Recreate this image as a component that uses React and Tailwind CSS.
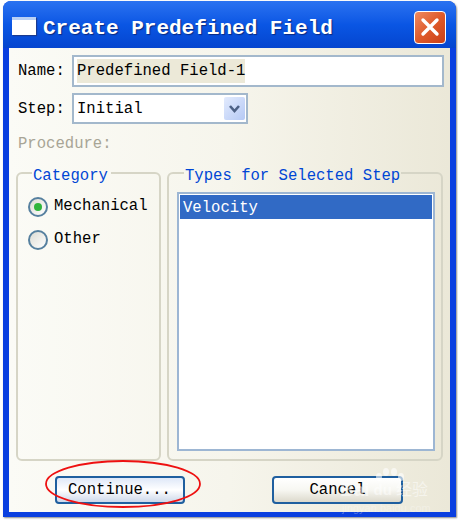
export default function App() {
  const mono = "font-['Liberation_Mono','DejaVu_Sans_Mono',monospace]";
  return (
    <div className={`relative w-[458px] h-[521px] bg-white overflow-hidden ${mono} text-[15.6px] text-black`}>
      <div className="ml-[3px] mt-[1px] w-[453px] h-[516px] flex flex-col rounded-t-[8px] bg-[#0a3fe0] shadow-[1px_1px_2px_#8a8a8a]">
        {/* Title bar */}
        <div className="h-[47px] shrink-0 flex items-center pl-[9px] pr-[10px] rounded-t-[8px] bg-gradient-to-b from-[#2a72f0] via-[#0a56e4] to-[#0545cf]">
          <div className="w-[24px] h-[18px] mt-[3px] bg-white border-t-[3px] border-[#b9d0f5] shadow-[1px_1px_1px_#1a3a90]" />
          <div className="ml-[7px] mt-[7px] text-[21px] leading-none font-bold text-white [text-shadow:1px_1px_1px_#0a2a80] whitespace-nowrap">Create Predefined Field</div>
          <div className="ml-auto mt-[5px] w-[32px] h-[33px] rounded-[4px] border border-white bg-gradient-to-br from-[#ee8a60] via-[#df5a2a] to-[#c93f18] flex items-center justify-center">
            <svg width="20" height="20" viewBox="0 0 20 20"><path d="M3 3 L17 17 M17 3 L3 17" stroke="#fff" strokeWidth="3.4" strokeLinecap="round" /></svg>
          </div>
        </div>
        {/* Body */}
        <div className="mx-[6px] mb-[5px] flex-1 flex flex-col pl-[9px] pr-[6px] bg-gradient-to-r from-[#fbfbf6] via-[#f6f5ec] to-[#ebe8d8]">
          <div className="flex items-center mt-[7px] h-[32px]">
            <span className="w-[54px] shrink-0 pt-[2px]">Name:</span>
            <div className="flex-1 h-[32px] bg-white border-2 border-[#a3b8cc] flex items-center pl-[3px]">
              <span className="bg-[#ece9d8] leading-[24px] h-[24px] whitespace-nowrap">Predefined Field-1</span>
            </div>
          </div>
          <div className="flex items-center mt-[6px] h-[31px]">
            <span className="w-[54px] shrink-0 pt-[2px]">Step:</span>
            <div className="w-[176px] h-[31px] bg-white border-2 border-[#a3b8cc] flex items-center justify-between pl-[3px] pr-[1px]">
              <span className="pt-[2px]">Initial</span>
              <div className="w-[21px] h-[23px] rounded-[2px] bg-gradient-to-br from-[#e3ebfd] to-[#b5c9f5] flex items-center justify-center">
                <svg width="13" height="10" viewBox="0 0 13 10"><path d="M2 2 L6.5 7 L11 2" fill="none" stroke="#4d6185" strokeWidth="2.6" /></svg>
              </div>
            </div>
          </div>
          <div className="mt-[10px] h-[20px] leading-[20px] text-[#a8a596]">Procedure:</div>
          <div className="flex gap-[6px] mt-[9px] h-[298px] -ml-[2px]">
            <fieldset className="w-[145px] rounded-[6px] border-2 border-[#d6d5c6] pl-[15px] min-w-0">
              <legend className="text-[#0046d5] pl-[1px] pr-[3px] ml-[-1px] leading-[20px]"><span className="relative top-[3px]">Category</span></legend>
              <div className="mt-[12px] flex items-center h-[24px]">
                <div className="w-[20px] h-[20px] rounded-full border-2 border-[#56809f] bg-gradient-to-br from-[#dcdcd4] to-white flex items-center justify-center -ml-[5px]">
                  <div className="w-[8px] h-[8px] rounded-full bg-[#2fb53c]" />
                </div>
                <span className="ml-[6px]">Mechanical</span>
              </div>
              <div className="mt-[9px] flex items-center h-[24px]">
                <div className="w-[20px] h-[20px] rounded-full border-2 border-[#56809f] bg-gradient-to-br from-[#dcdcd4] to-white -ml-[5px]" />
                <span className="ml-[6px]">Other</span>
              </div>
            </fieldset>
            <fieldset className="w-[276px] rounded-[6px] border-2 border-[#d6d5c6] px-[8px] min-w-0">
              <legend className="text-[#0046d5] px-[1px] ml-[7px] leading-[20px]"><span className="relative top-[3px]">Types for Selected Step</span></legend>
              <div className="mt-[9px] h-[259px] w-[258px] bg-white border-2 border-[#9db6d3] p-[1px]">
                <div className="h-[24px] bg-[#316ac5] text-white pl-[3px] leading-[27px]">Velocity</div>
              </div>
            </fieldset>
          </div>
          <div className="flex mt-[15px] pl-[37px]">
            <button className="w-[130px] h-[28px] rounded-[4px] border-2 border-[#1f5f9f] bg-gradient-to-b from-[#dfe8f8] via-white to-[#cdd8ea] flex items-center pl-[11px] pt-[2px] leading-none">Continue...</button>
            <button className="ml-[87px] w-[131px] h-[28px] rounded-[4px] border-2 border-[#1f5f9f] bg-gradient-to-b from-white via-[#f7f7f2] to-[#dcd9cc] flex items-center justify-center pt-[2px] leading-none">Cancel</button>
          </div>
        </div>
      </div>
      {/* Red annotation */}
      <svg className="absolute left-0 top-0 pointer-events-none" width="458" height="521">
        <ellipse cx="123" cy="484" rx="77" ry="23" fill="none" stroke="#ee1111" strokeWidth="1.8" />
      </svg>
      {/* Watermark */}
      <svg className="absolute left-[372px] top-[466px] pointer-events-none" width="34" height="22" viewBox="0 0 34 22">
        <g fill="#fff" fillOpacity="0.6">
          <ellipse cx="7" cy="11" rx="3" ry="4" />
          <ellipse cx="14" cy="6" rx="3" ry="4" />
          <ellipse cx="22" cy="6" rx="3" ry="4" />
          <ellipse cx="29" cy="11" rx="3" ry="4" />
        </g>
      </svg>
      <div className="absolute left-[340px] top-[478px] flex items-center text-white/50 font-['Liberation_Sans','Noto_Sans_CJK_SC',sans-serif] text-[19px] leading-[24px] font-bold pointer-events-none">
        <span>Bai</span><span className="ml-[4px] text-[15px]">du</span><span className="ml-[4px] text-[16px] font-normal">经验</span>
      </div>
      <div className="absolute left-[342px] top-[501px] text-white/30 font-['Liberation_Sans',sans-serif] text-[11px] leading-[14px] pointer-events-none">jingyan.baidu.com</div>
    </div>
  );
}
